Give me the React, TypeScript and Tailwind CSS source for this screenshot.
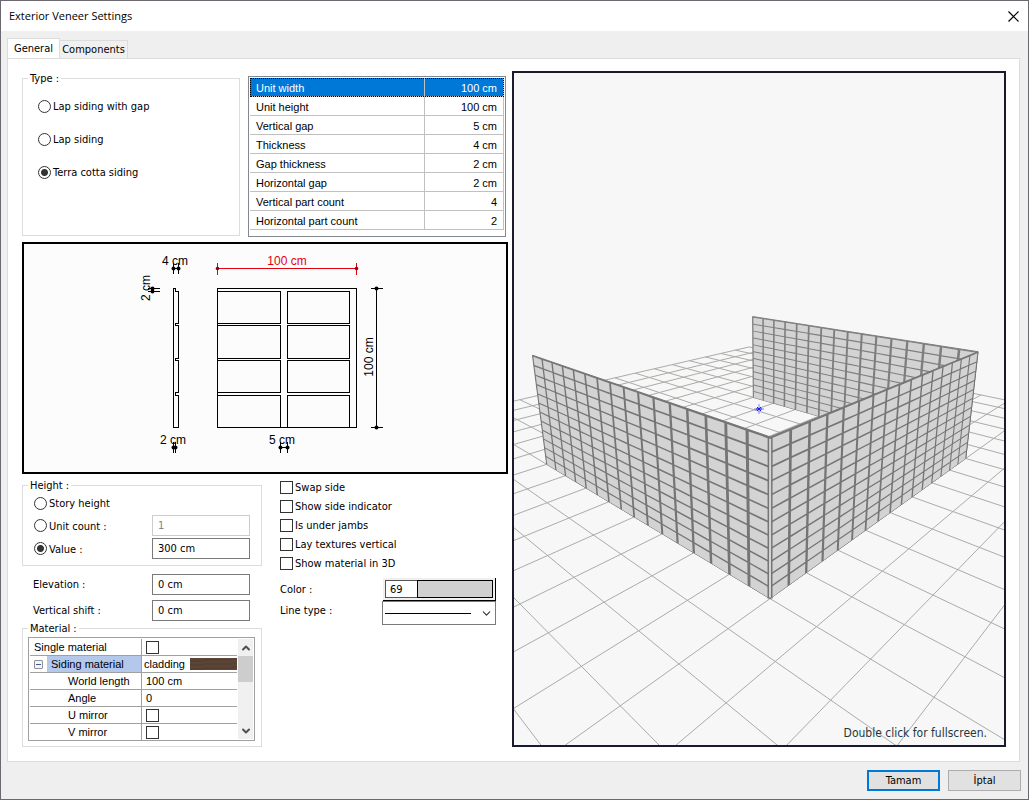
import { ReactNode } from 'react';
import { ChevronDown, ChevronUp } from 'lucide-react';

const unitParams = [
  ['Unit width', '100 cm'],
  ['Unit height', '100 cm'],
  ['Vertical gap', '5 cm'],
  ['Thickness', '4 cm'],
  ['Gap thickness', '2 cm'],
  ['Horizontal gap', '2 cm'],
  ['Vertical part count', '4'],
  ['Horizontal part count', '2'],
];

const options = ['Swap side', 'Show side indicator', 'Is under jambs', 'Lay textures vertical', 'Show material in 3D'];

const checkbox = 'size-[13px] shrink-0 appearance-none border border-[#333] bg-white checked:bg-[#333]';

function Group({ title, className, children }: { title: string; className: string; children: ReactNode }) {
  return (
    <fieldset className={`border border-[#dcdcdc] ${className}`}>
      <legend className="ml-[5px] h-[14px] px-[2px] leading-[16px]">{title}</legend>
      {children}
    </fieldset>
  );
}

function Radio({ name, label, checked }: { name: string; label: string; checked?: boolean }) {
  return (
    <label className="flex h-5 items-center gap-[2px]">
      <input
        type="radio"
        name={name}
        defaultChecked={checked}
        className="size-[13px] shrink-0 appearance-none rounded-full border border-[#333] bg-white checked:bg-[radial-gradient(circle,#333_3px,#fff_4px)]"
      />
      <span className="pt-[2px]">{label}</span>
    </label>
  );
}

function TextBox({ label, value, disabled }: { label: string; value: string; disabled?: boolean }) {
  return (
    <input
      type="text"
      aria-label={label}
      defaultValue={value}
      disabled={disabled}
      className="h-[21px] w-[98px] border border-[#7a7a7a] bg-white px-[5px] disabled:border-[#ccc] disabled:text-[#838383]"
    />
  );
}

function UnitDiagram() {
  const rows = [
    [291, 323],
    [325, 358],
    [360, 392],
    [395, 427],
  ];
  const dots = [
    [173, 268],
    [178, 268],
    [152, 288],
    [152, 291],
    [376, 288],
    [376, 427],
    [173, 447],
    [175, 447],
    [280, 447],
    [287, 447],
  ];

  return (
    <svg viewBox="24 244 482 228" className="h-[228px] w-full font-['Liberation_Sans',sans-serif] text-[12px]">
      <g transform="translate(.5 .5)" fill="none" stroke="#000" shapeRendering="crispEdges">
        <rect x="217" y="288" width="139" height="139" />
        {rows.map(([top, bottom]) => (
          <g key={top}>
            <rect x="217" y={top} width="63" height={bottom - top} />
            <rect x="287" y={top} width="62" height={bottom - top} />
          </g>
        ))}
        <path d="M173 288h2v3h3v32h-3v2h3v33h-3v2h3v32h-3v3h3v32h-5z" />
        <path d="M173 262v11M178 262v11M173 268h5M147 288h12M147 291h12M152 288v3" />
        <path d="M376 288v139M370 288h12M370 427h12" />
        <path d="M173 441v11M175 441v11M280 441v11M287 441v11M280 447h7" />
        <path stroke="#e3000f" d="M217 262v12M356 262v12M217 268h139" />
      </g>
      {dots.map(([x, y]) => (
        <circle key={`${x}-${y}`} cx={x + 0.5} cy={y + 0.5} r="2" />
      ))}
      <circle cx="217.5" cy="268.5" r="1.8" fill="#8c0010" />
      <circle cx="356.5" cy="268.5" r="1.8" fill="#8c0010" />
      <g textAnchor="middle">
        <text x="175" y="265">4 cm</text>
        <text x="287" y="265" fill="#e3000f">100 cm</text>
        <text x="173" y="444">2 cm</text>
        <text x="282" y="444">5 cm</text>
        <text transform="translate(150 288) rotate(-90)">2 cm</text>
        <text transform="translate(373 357) rotate(-90)">100 cm</text>
      </g>
    </svg>
  );
}

// Camera of the preview: u runs along the right wall, v along the left one, z is up (all in metres).
function project(u: number, v: number, z = 0) {
  const w = 1 + 0.07364 * u + 0.06911 * v - 0.03113 * z;
  const x = (770 + 95.58 * u + 9.87 * v - 23.93 * z) / w;
  const y = (598.6 + 16.25 * u + 15.3 * v - 67.5 * z) / w;
  return `${x.toFixed(2)},${y.toFixed(2)}`;
}

type WallPoint = (s: number, z: number) => string;

function Wall({ at, joint }: { at: WallPoint; joint: string }) {
  const face = [at(0, 0), at(8, 0), at(8, 3), at(0, 3)].join(' ');
  let bricks = '';
  for (let col = 0; col < 16; col++) {
    for (let row = 0; row < 12; row++) {
      const s = col * 0.5 + 0.035;
      const z = row * 0.25;
      bricks += `M${at(s, z)}L${at(s + 0.43, z)}L${at(s + 0.43, z + 0.215)}L${at(s, z + 0.215)}Z`;
    }
  }
  return (
    <g>
      <polygon points={face} fill={joint} stroke={joint} />
      <path d={bricks} fill="#d3d3d3" />
    </g>
  );
}

function Preview() {
  const lines = Array.from({ length: 21 }, (_, i) => i - 6);
  const grid = lines.map((n) => `M${project(n, -6)}L${project(n, 14)}M${project(-6, n)}L${project(14, n)}`).join('');

  return (
    <svg viewBox="514 73 490 672" preserveAspectRatio="xMidYMid slice" className="h-[672px] w-full">
      <path d={grid} stroke="#a9aca7" fill="none" />
      <Wall at={(s, z) => project(8, s, z)} joint="#7e7e7e" />
      <path d="M759 404v10M754 409h10" stroke="#8080ff" />
      <path d="M757 407l4 4M761 407l-4 4M756 409h6" stroke="#1a1aff" />
      <Wall at={(s, z) => project(0, s, z)} joint="#757575" />
      <Wall at={(s, z) => project(s, 0, z)} joint="#757575" />
      <path d={`M${project(0, 0)}L${project(0, 0, 3)}`} stroke="#757575" strokeWidth="5" />
      <path d={`M${project(0, 0, 0.02)}L${project(0, 0, 2.97)}`} stroke="#d3d3d3" strokeWidth="2" />
    </svg>
  );
}

function MaterialRow({ label, children }: { label: ReactNode; children: ReactNode }) {
  return (
    <tr className="group h-[17px] last:h-4">
      <th
        scope="row"
        className="w-[112px] border-r border-b border-[#a0a0a0] p-0 text-left font-normal group-last:border-b-0"
      >
        {label}
      </th>
      <td className="border-b border-[#a0a0a0] p-0 group-last:border-b-0">{children}</td>
    </tr>
  );
}

function MaterialList() {
  return (
    <div className="ml-[5px] flex h-[104px] w-[227px] border border-[#a0a0a0] p-px font-['Liberation_Sans',sans-serif]">
      <table className="h-[101px] w-[207px] table-fixed border-separate border-spacing-0 leading-[16px]">
        <tbody>
          <MaterialRow label={<span className="pl-1">Single material</span>}>
            <input type="checkbox" aria-label="Single material" className={`${checkbox} ml-1 block`} />
          </MaterialRow>
          <MaterialRow
            label={
              <span className="flex items-center">
                <button
                  aria-label="Collapse"
                  className="mx-1 flex size-[9px] items-center justify-center rounded-[1px] border border-[#919191] bg-[#f4f4f4]"
                >
                  <span className="h-px w-[5px] bg-[#3b5aa0]" />
                </button>
                <span className="flex-1 bg-[#b4c8ec] pl-1">Siding material</span>
              </span>
            }
          >
            <span className="flex items-center justify-between pl-[2px]">
              cladding
              <span className="h-3 w-[47px] bg-[repeating-linear-gradient(178deg,#5c4537_0_2px,#554034_2px_4px)]" />
            </span>
          </MaterialRow>
          <MaterialRow label={<span className="pl-[38px]">World length</span>}>
            <span className="pl-1">100 cm</span>
          </MaterialRow>
          <MaterialRow label={<span className="pl-[38px]">Angle</span>}>
            <span className="pl-1">0</span>
          </MaterialRow>
          <MaterialRow label={<span className="pl-[38px]">U mirror</span>}>
            <input type="checkbox" aria-label="U mirror" className={`${checkbox} ml-1 block`} />
          </MaterialRow>
          <MaterialRow label={<span className="pl-[38px]">V mirror</span>}>
            <input type="checkbox" aria-label="V mirror" className={`${checkbox} ml-1 block`} />
          </MaterialRow>
        </tbody>
      </table>
      <div className="ml-px flex w-[15px] flex-col bg-[#f0f0f0]">
        <button aria-label="Scroll up" className="flex h-[17px] items-center justify-center text-[#505050]">
          <ChevronUp size={12} strokeWidth={4} />
        </button>
        <div className="h-[26px] bg-[#cdcdcd]" />
        <button aria-label="Scroll down" className="mt-auto flex h-[17px] items-center justify-center text-[#505050]">
          <ChevronDown size={12} strokeWidth={4} />
        </button>
      </div>
    </div>
  );
}

export default function App() {
  return (
    <div className="flex min-h-screen w-full flex-col border border-[#6b6870] bg-[#efefef] font-['DejaVu_Sans_Condensed','Liberation_Sans',sans-serif] text-[11px] leading-[14px] text-black">
      <header className="flex h-[30px] items-center justify-between bg-white pr-[9px] pl-2">
        <h1 className="font-['Open_Sans',sans-serif] text-[11px]">Exterior Veneer Settings</h1>
        <button aria-label="Close">
          <svg viewBox="0 0 11 11" className="size-[11px]" stroke="#000" strokeWidth="1.2">
            <path d="M.5 .5l10 10M10.500 .5l-10 10" />
          </svg>
        </button>
      </header>

      <nav className="flex items-end pt-[7px] pl-[6px]">
        <button className="-mb-px h-[21px] w-[53px] border border-b-0 border-[#dcdcdc] bg-white">General</button>
        <button className="h-[18px] w-[68px] border border-b-0 border-l-0 border-[#dcdcdc] bg-[#f0f0f0] pt-px">
          Components
        </button>
      </nav>

      <main className="mr-2 ml-[6px] flex gap-1 border border-[#dcdcdc] bg-white pt-3 pr-[13px] pb-[14px] pl-[14px]">
        <div className="flex w-[486px] shrink-0 flex-col">
          <div className="flex gap-2">
            <Group title="Type :" className="h-[165px] w-[218px]">
              <div className="flex flex-col gap-[13px] pt-[11px] pl-[15px]">
                <Radio name="type" label="Lap siding with gap" />
                <Radio name="type" label="Lap siding" />
                <Radio name="type" label="Terra cotta siding" checked />
              </div>
            </Group>
            <div className="mt-[5px] h-[161px] w-[258px] border border-[#828790] p-px font-['Liberation_Sans',sans-serif]">
              <table className="w-full table-fixed border-separate border-spacing-0">
                <tbody>
                  {unitParams.map(([name, value], i) => (
                    <tr
                      key={name}
                      className={i === 0 ? 'h-[19px] bg-[#0078d7] text-white outline-1 -outline-offset-1 outline-dotted outline-black' : 'h-[19px]'}
                    >
                      <th
                        scope="row"
                        className="w-[175px] border-r border-b border-[#c0c0c0] p-0 pt-[2px] pl-[6px] text-left font-normal"
                      >
                        {name}
                      </th>
                      <td className="border-r border-b border-[#c0c0c0] p-0 pt-[2px] pr-[6px] text-right">{value}</td>
                    </tr>
                  ))}
                </tbody>
              </table>
            </div>
          </div>

          <div className="mt-[5px] border-2 border-black bg-[#fcfcfc]">
            <UnitDiagram />
          </div>

          <div className="mt-1 flex gap-[18px]">
            <div className="w-[240px]">
              <Group title="Height :" className="h-[88px]">
                <div className="flex flex-col gap-[2px] pt-px pr-[11px] pl-[11px]">
                  <Radio name="height" label="Story height" />
                  <div className="flex items-center justify-between">
                    <Radio name="height" label="Unit count :" />
                    <TextBox label="Unit count" value="1" disabled />
                  </div>
                  <div className="flex items-center justify-between">
                    <Radio name="height" label="Value :" checked />
                    <TextBox label="Value" value="300 cm" />
                  </div>
                </div>
              </Group>
              <div className="mt-2 flex flex-col gap-[5px] pr-3 pl-[11px]">
                <div className="flex items-center justify-between">
                  <span>Elevation :</span>
                  <TextBox label="Elevation" value="0 cm" />
                </div>
                <div className="flex items-center justify-between">
                  <span>Vertical shift :</span>
                  <TextBox label="Vertical shift" value="0 cm" />
                </div>
              </div>
              <Group title="Material :" className="h-[126px]">
                <div className="pt-[2px]">
                  <MaterialList />
                </div>
              </Group>
            </div>

            <div className="w-[216px]">
              {options.map((option) => (
                <label key={option} className="flex h-[19px] items-center gap-[2px]">
                  <input type="checkbox" className={checkbox} />
                  <span className="pt-px">{option}</span>
                </label>
              ))}
              <div className="mt-[5px] flex h-[23px] items-center justify-between">
                <span>Color :</span>
                <button
                  aria-label="Color 69"
                  className="flex h-[23px] w-[113px] border-r border-b border-black bg-[#f0f0f0] p-[2px]"
                >
                  <span className="h-full w-8 border border-r-0 border-[#555] bg-white pl-1 text-left leading-[17px]">69</span>
                  <span className="h-full flex-1 border border-black bg-[#d0d0d0]" />
                </button>
              </div>
              <div className="flex h-6 justify-between">
                <label htmlFor="line-type" className="pt-[3px]">
                  Line type :
                </label>
                <div className="grid w-[114px]">
                  <select
                    id="line-type"
                    className="col-start-1 row-start-1 w-full appearance-none border border-[#7a7a7a] bg-white"
                  >
                    <option aria-label="Solid" />
                  </select>
                  <div className="pointer-events-none col-start-1 row-start-1 flex items-center justify-between px-[3px]">
                    <span className="h-px w-[86px] bg-black" />
                    <ChevronDown size={13} strokeWidth={2} className="text-[#333]" />
                  </div>
                </div>
              </div>
            </div>
          </div>
        </div>

        <section className="relative min-w-0 flex-1 border-2 border-[#1a1a2e] bg-[#f7f7f7]">
          <Preview />
          <p className="absolute right-[17px] bottom-1 text-[12px] leading-[16px] text-[#24393b]">
            Double click for fullscreen.
          </p>
        </section>
      </main>

      <footer className="flex justify-end gap-2 pt-2 pr-[7px] pb-2">
        <button className="h-[21px] w-[73px] border-2 border-[#0078d7] bg-[#e1e1e1]">Tamam</button>
        <button className="h-[21px] w-[73px] border border-[#adadad] bg-[#e1e1e1] pt-px">İptal</button>
      </footer>
    </div>
  );
}
